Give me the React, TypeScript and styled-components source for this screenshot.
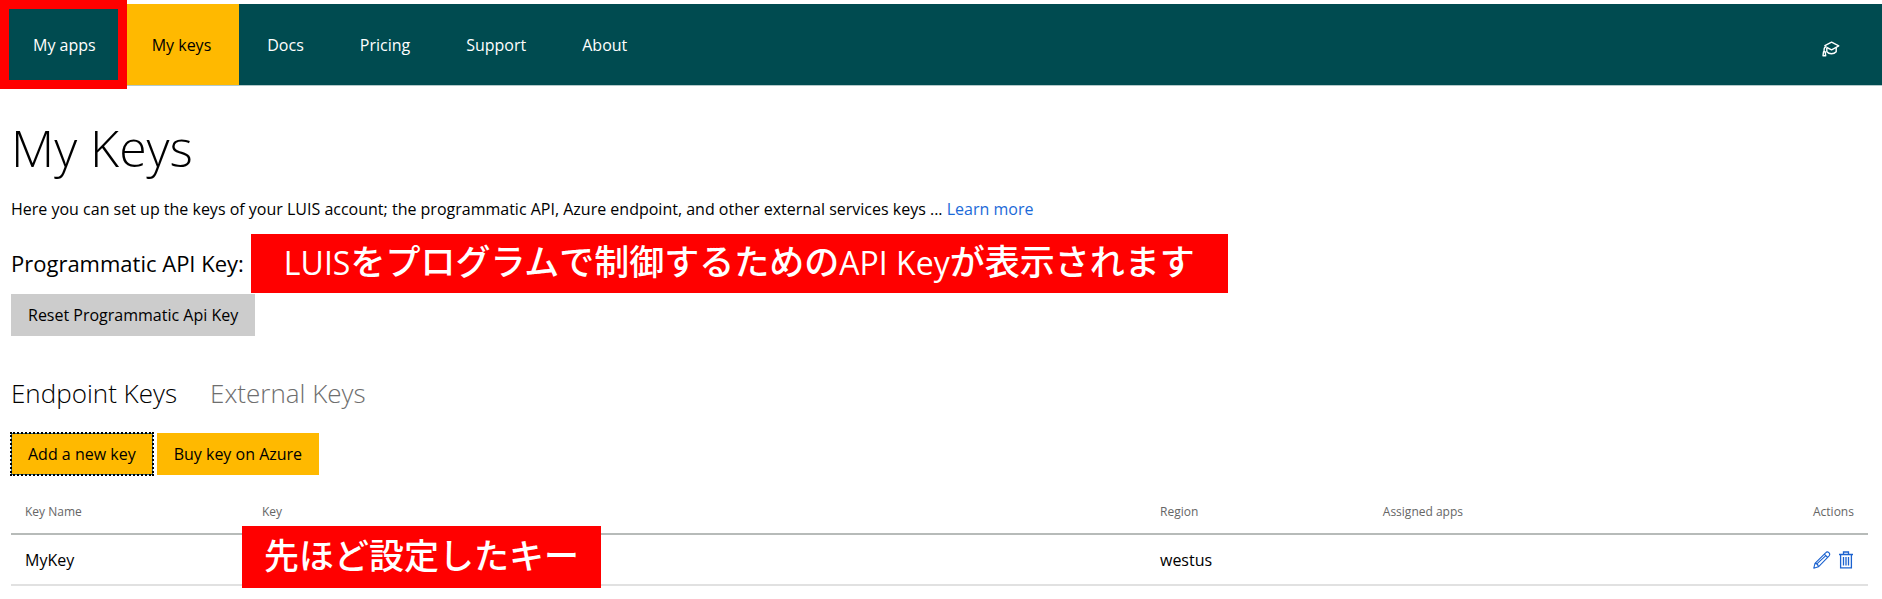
import React from 'react';
import styled, { createGlobalStyle } from 'styled-components';

const GlobalStyle = createGlobalStyle`
  *, *::before, *::after { box-sizing: border-box; }
  body {
    margin: 0;
    background: #fff;
    color: #000;
    font: 400 16px/24px "Open Sans", "Noto Sans CJK JP", sans-serif;
  }
  button { font: inherit; cursor: pointer; }
`;

const Page = styled.div`
  padding-top: 4px;
`;

const NavBar = styled.nav`
  display: flex;
  align-items: stretch;
  height: 82px;
  padding: 0 28px 0 5px;
  background: #004b50;
  border-bottom: 1px solid #b3c9ca;
`;

const NavLink = styled.a<{ $active?: boolean }>`
  position: relative;
  display: flex;
  align-items: center;
  padding: 0 28px;
  text-decoration: none;
  color: ${(p) => (p.$active ? '#000' : '#fff')};
  background: ${(p) => (p.$active ? '#ffb900' : 'transparent')};
`;

const Highlight = styled.span`
  position: absolute;
  z-index: 1;
  inset: -4px -3px -4px -5px;
  border: 9px solid #f00;
  pointer-events: none;
`;

const NavIcon = styled.button`
  display: flex;
  align-items: center;
  margin-left: auto;
  padding: 8px 14px 0;
  border: 0;
  background: none;
  color: #fff;
`;

const Main = styled.main`
  padding: 30px 14px 12px 11px;
`;

const Title = styled.h1`
  margin: 0 0 17px;
  font-size: 50px;
  font-weight: 300;
  line-height: 64px;
`;

const Intro = styled.p`
  margin: 0 0 13px;
`;

const TextLink = styled.a`
  color: #1b6ad8;
  text-decoration: none;
`;

const ApiKeyRow = styled.div`
  display: flex;
  align-items: center;
  gap: 7px;
  margin-bottom: 1px;
`;

const ApiKeyLabel = styled.h2`
  margin: 0 0 2px;
  font-size: 22px;
  font-weight: 400;
  line-height: 32px;
  white-space: nowrap;
`;

const Banner = styled.div`
  padding: 0 33px 3px;
  background: #f00;
  color: #fff;
  font-size: 35px;
  font-weight: 500;
  line-height: 56px;
  white-space: nowrap;
`;

const Latin = styled.span`
  font-size: 32px;
  font-weight: 400;
  line-height: 32px;
`;

const CellBanner = styled(Banner)`
  position: absolute;
  z-index: 1;
  top: -9px;
  left: -6px;
  padding: 0 22px 2px;
  line-height: 60px;
`;

const Button = styled.button<{ $tone?: 'grey' }>`
  height: 42px;
  padding: 0 17px;
  border: 0;
  background: ${(p) => (p.$tone === 'grey' ? '#ccc' : '#ffb900')};
  color: #000;
`;

const FocusedButton = styled(Button)`
  outline: 2px dotted #000;
  outline-offset: -1px;
  box-shadow: inset 0 0 0 1px #2c6a80;
`;

const Tabs = styled.div`
  display: flex;
  gap: 33px;
  margin: 41px 0 24px;
`;

const Tab = styled.button<{ $selected?: boolean }>`
  padding: 0;
  border: 0;
  background: none;
  color: ${(p) => (p.$selected ? '#000' : '#6e6e6e')};
  font-size: 26px;
  font-weight: 300;
  line-height: 32px;
`;

const ButtonRow = styled.div`
  display: flex;
  gap: 4px;
  margin-bottom: 16px;
`;

const KeyTable = styled.table`
  width: 100%;
  table-layout: fixed;
  border-collapse: separate;
  border-spacing: 0;
`;

const HeadCell = styled.th<{ $width?: string }>`
  width: ${(p) => p.$width ?? 'auto'};
  height: 44px;
  padding: 0 0 0 14px;
  border-bottom: 2px solid #b7bbb9;
  color: #666;
  font-size: 12px;
  font-weight: 400;
  line-height: 16px;
  text-align: left;
`;

const Cell = styled.td`
  position: relative;
  height: 51px;
  padding: 0 0 0 14px;
  border-bottom: 2px solid #e1e1e1;
`;

const Actions = styled.div`
  display: flex;
  gap: 8px;
`;

const IconButton = styled.button`
  display: flex;
  padding: 0;
  border: 0;
  background: none;
  color: #1b62cf;
`;

const CapIcon = () => (
  <svg width="18" height="16" viewBox="0 0 18 16" fill="none" stroke="currentColor" strokeWidth="1.4" strokeLinejoin="round">
    <path d="M2.400 4.800 9.600 1.200l7.200 3.600-7.200 4-4.800-2.300" />
    <path d="M4.800 6.400v4.400c2.200 2.600 7 2.600 9.400 0V6.400" />
    <path d="M4.600 5.500C2.800 5.900 2.100 7 2.100 8.600v2" />
    <path d="M1.500 10.800h1.700l.5 4H1z" />
  </svg>
);

const PencilIcon = () => (
  <svg width="18" height="18" viewBox="0 0 18 18" fill="none" stroke="currentColor" strokeWidth="1.1" strokeLinejoin="round">
    <path d="M.8 17.200 2 12.400 12.600 1.800c1-1.100 2.300-1.100 3.300-.2 1 1 1 2.400 0 3.500L5.400 15.800z" />
    <path d="M11.300 3.100l3.400 3.400M2 12.400c1.600.1 3.200 1.600 3.400 3.400M3.600 13.200 12.800 4.600" />
  </svg>
);

const TrashIcon = () => (
  <svg width="14" height="18" viewBox="0 0 14 18" fill="none" stroke="currentColor" strokeWidth="1.3">
    <path d="M0 3.500h14M4.500 3.500V1h5v2.500M1.600 3.500v13.300h10.800V3.500" />
    <path d="M4.500 6v8.500M7 6v8.500M9.500 6v8.500" />
  </svg>
);

const navItems = ['My apps', 'My keys', 'Docs', 'Pricing', 'Support', 'About'];

const columns = [
  { name: 'Key Name', width: '12.76%' },
  { name: 'Key', width: '48.36%' },
  { name: 'Region', width: '12%' },
  { name: 'Assigned apps' },
  { name: 'Actions', width: '69px' },
];

export default function App() {
  return (
    <Page>
      <GlobalStyle />
      <NavBar>
        {navItems.map((item) => (
          <NavLink key={item} href="#" $active={item === 'My keys'}>
            {item}
            {item === 'My apps' && <Highlight />}
          </NavLink>
        ))}
        <NavIcon aria-label="Tutorials">
          <CapIcon />
        </NavIcon>
      </NavBar>
      <Main>
        <Title>My Keys</Title>
        <Intro>
          Here you can set up the keys of your LUIS account; the programmatic API, Azure endpoint, and other external
          services keys ... <TextLink href="#">Learn more</TextLink>
        </Intro>
        <ApiKeyRow>
          <ApiKeyLabel>Programmatic API Key:</ApiKeyLabel>
          <Banner lang="ja">
            <Latin>LUIS</Latin>をプログラムで制御するための<Latin>API Key</Latin>が表示されます
          </Banner>
        </ApiKeyRow>
        <Button $tone="grey">Reset Programmatic Api Key</Button>
        <Tabs role="tablist">
          <Tab role="tab" aria-selected="true" $selected>
            Endpoint Keys
          </Tab>
          <Tab role="tab" aria-selected="false">
            External Keys
          </Tab>
        </Tabs>
        <ButtonRow>
          <FocusedButton>Add a new key</FocusedButton>
          <Button>Buy key on Azure</Button>
        </ButtonRow>
        <KeyTable>
          <thead>
            <tr>
              {columns.map((column) => (
                <HeadCell key={column.name} scope="col" $width={column.width}>
                  {column.name}
                </HeadCell>
              ))}
            </tr>
          </thead>
          <tbody>
            <tr>
              <Cell>MyKey</Cell>
              <Cell>
                <CellBanner lang="ja">先ほど設定したキー</CellBanner>
              </Cell>
              <Cell>westus</Cell>
              <Cell />
              <Cell>
                <Actions>
                  <IconButton aria-label="Edit key">
                    <PencilIcon />
                  </IconButton>
                  <IconButton aria-label="Delete key">
                    <TrashIcon />
                  </IconButton>
                </Actions>
              </Cell>
            </tr>
          </tbody>
        </KeyTable>
      </Main>
    </Page>
  );
}
